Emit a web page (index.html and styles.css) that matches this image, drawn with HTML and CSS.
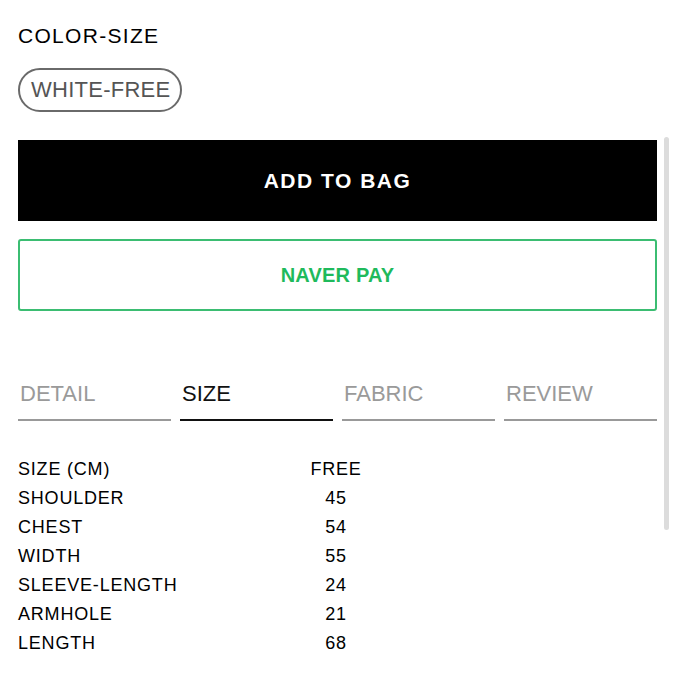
FILE: index.html
```html
<!DOCTYPE html>
<html>
<head>
<meta charset="utf-8">
<link rel="stylesheet" href="styles.css">
</head>
<body>
<div class="page">
  <div class="section-title">COLOR-SIZE</div>
  <div class="options">
    <span class="pill">WHITE-FREE</span>
  </div>
  <button class="btn btn-bag">ADD TO BAG</button>
  <button class="btn btn-naver">NAVER PAY</button>
  <nav class="tabs">
    <div class="tab">DETAIL</div>
    <div class="tab active">SIZE</div>
    <div class="tab">FABRIC</div>
    <div class="tab">REVIEW</div>
  </nav>
  <div class="size-table">
    <div class="lbl">SIZE (CM)</div><div class="val">FREE</div>
    <div class="lbl">SHOULDER</div><div class="val">45</div>
    <div class="lbl">CHEST</div><div class="val">54</div>
    <div class="lbl">WIDTH</div><div class="val">55</div>
    <div class="lbl">SLEEVE-LENGTH</div><div class="val">24</div>
    <div class="lbl">ARMHOLE</div><div class="val">21</div>
    <div class="lbl">LENGTH</div><div class="val">68</div>
  </div>
</div>
<div class="scroll-thumb"></div>
</body>
</html>
```
FILE: styles.css
```css
* { box-sizing: border-box; }
html, body { margin: 0; padding: 0; background: #fff; }
body {
  font-family: "Liberation Sans", Arial, sans-serif;
  color: #000;
  width: 675px;
  height: 675px;
  overflow: hidden;
  position: relative;
}
.page {
  padding: 23px 18px 0 18px;
}
.section-title {
  font-size: 21px;
  line-height: 25px;
  letter-spacing: 1.3px;
}
.options {
  margin-top: 20px;
  display: flex;
}
.pill {
  display: inline-flex;
  align-items: center;
  justify-content: center;
  height: 44px;
  padding: 0 10px 0 11px;
  border: 2px solid #6a6a6a;
  border-radius: 22px;
  font-size: 22px;
  color: #555;
  letter-spacing: 0.25px;
}
.btn {
  display: block;
  width: 100%;
  font-family: "Liberation Sans", Arial, sans-serif;
  font-weight: bold;
  text-align: center;
  padding: 0;
  margin: 0;
  cursor: pointer;
}
.btn-bag {
  margin-top: 28px;
  height: 81px;
  background: #000;
  color: #fff;
  border: none;
  font-size: 21px;
  letter-spacing: 1.5px;
}
.btn-naver {
  margin-top: 18px;
  height: 72px;
  background: #fff;
  color: #1fba5c;
  border: 2px solid #3bbd72;
  border-radius: 3px;
  font-size: 20px;
  letter-spacing: 0.2px;
}
.tabs {
  margin-top: 70px;
  display: grid;
  grid-template-columns: repeat(4, 1fr);
  column-gap: 9px;
}
.tab {
  font-size: 22px;
  line-height: 26px;
  color: #9a9a9a;
  padding: 0 2px 12px 2px;
  border-bottom: 2px solid #999;
}
.tab.active {
  color: #111;
  border-bottom-color: #111;
}
.size-table {
  margin-top: 34px;
  display: grid;
  grid-template-columns: 238px 160px;
  grid-auto-rows: 29px;
  font-size: 18px;
  line-height: 29px;
  letter-spacing: 0.8px;
}
.val {
  text-align: center;
}
.scroll-thumb {
  position: absolute;
  left: 664px;
  top: 137px;
  width: 5px;
  height: 393px;
  border-radius: 3px;
  background: #dcdcdc;
}
```
